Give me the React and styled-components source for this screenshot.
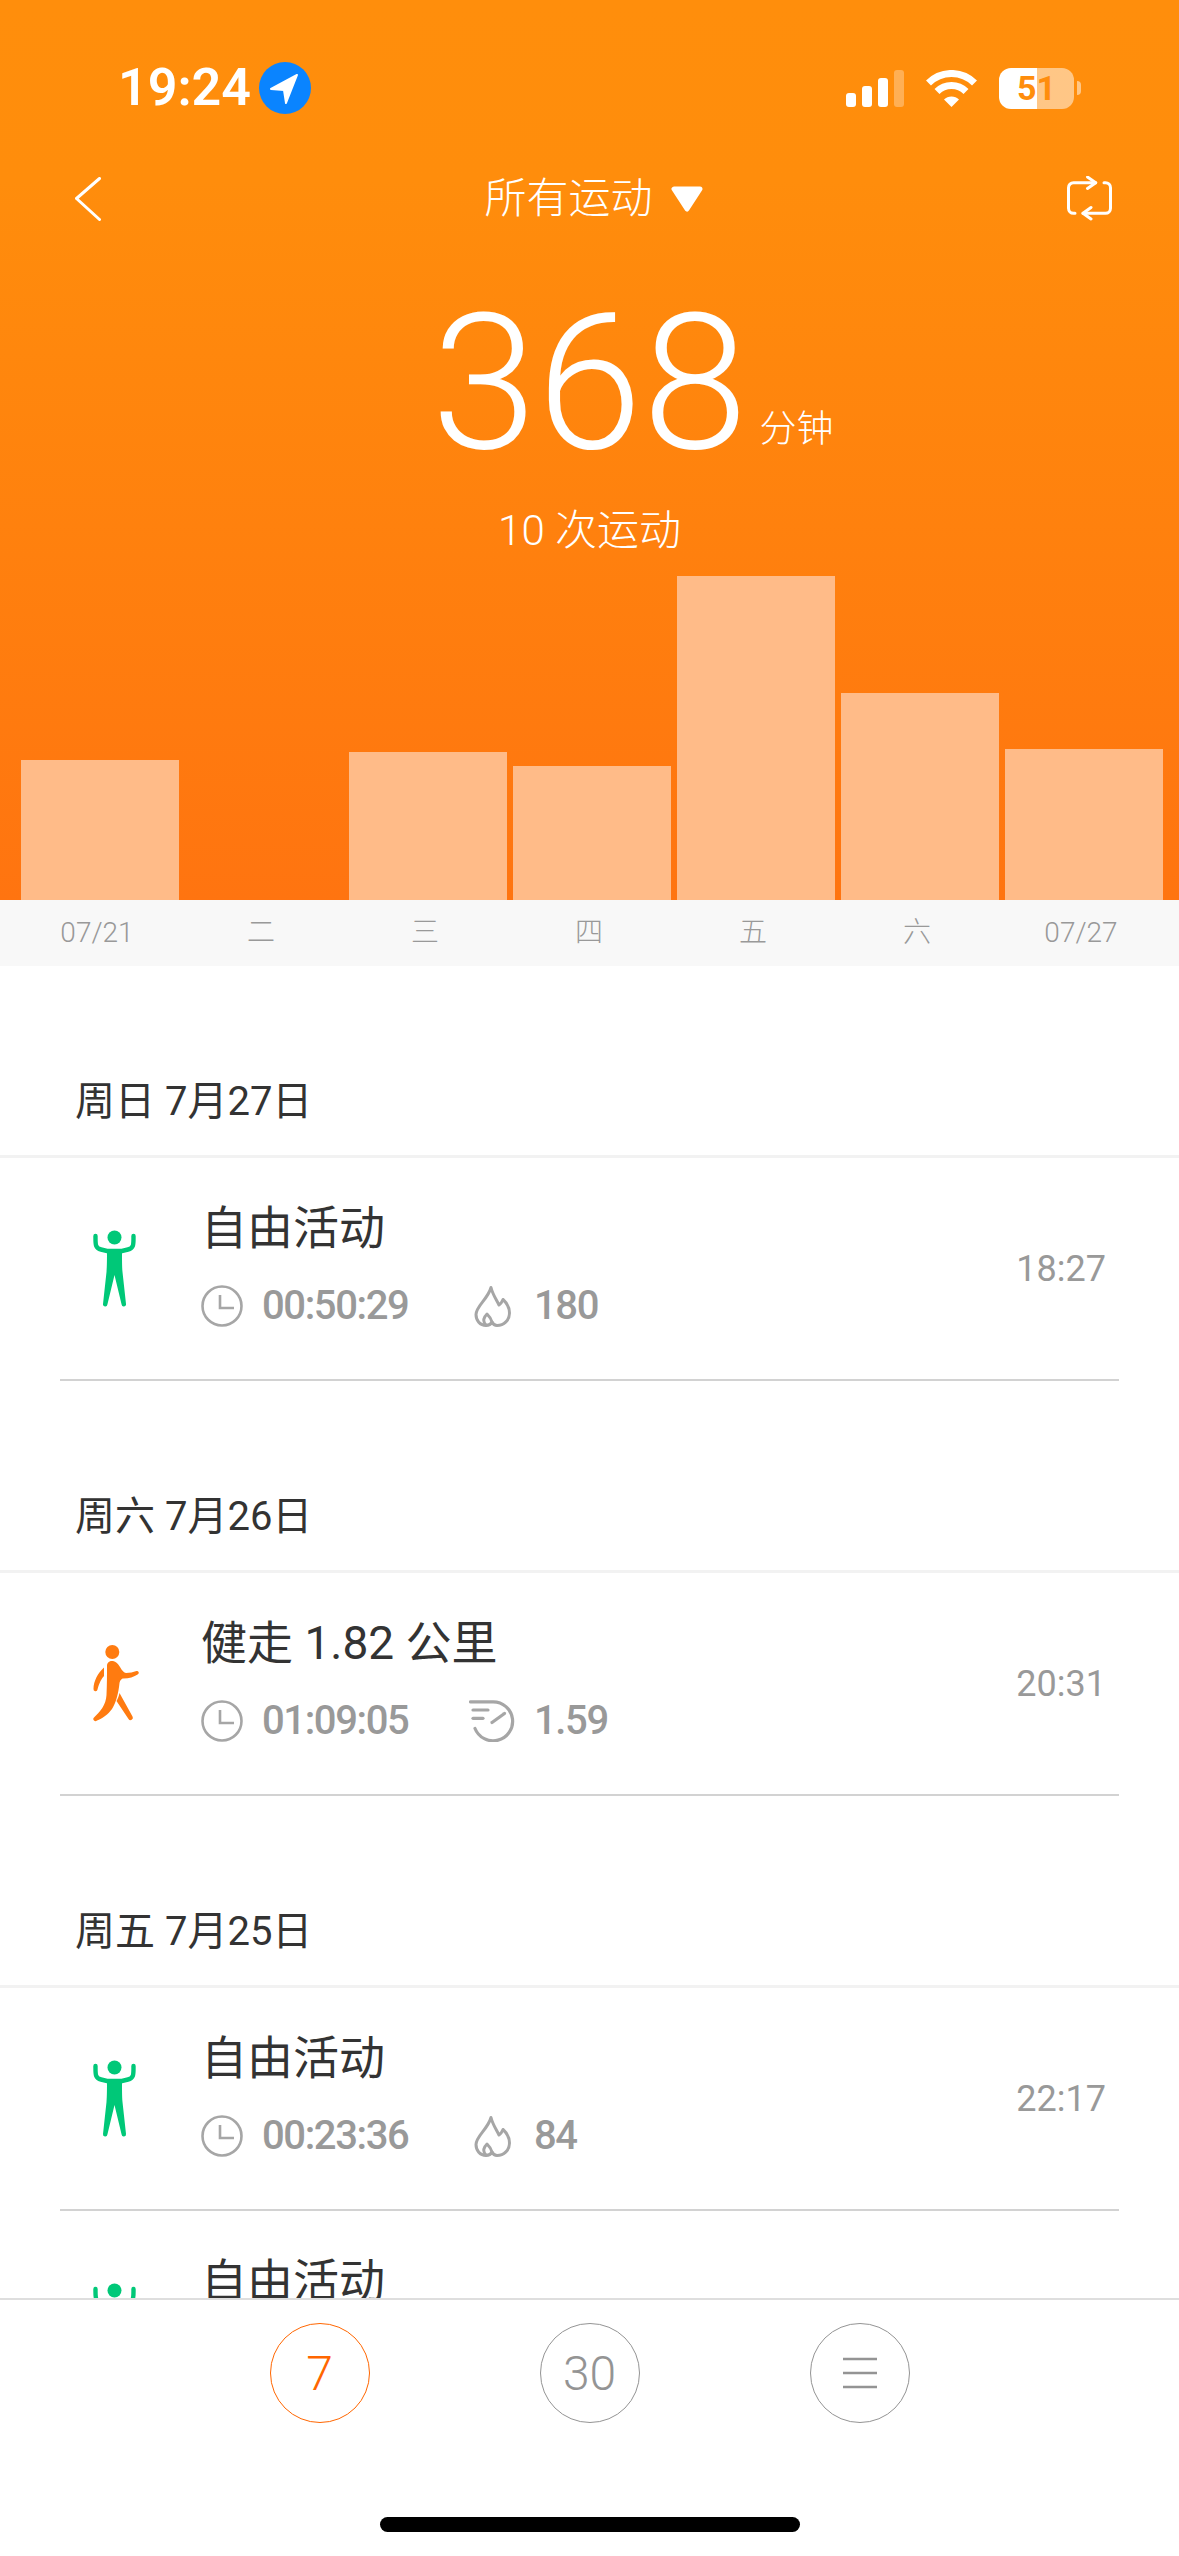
import React from "react"
import styled, { createGlobalStyle } from "styled-components"

const GlobalStyle = createGlobalStyle`
html, body {
    margin: 0;
    padding: 0;
    background: #fff;
}
body {
    font-family: Roboto, "Noto Sans CJK SC", sans-serif;
    color: #333;
}
`

const Page = styled.div`
width: 1179px;
height: 2556px;
display: flex;
flex-direction: column;
overflow: hidden;
background: #fff;
`

const Header = styled.header`
height: 900px;
flex: none;
display: flex;
flex-direction: column;
background: linear-gradient(180deg, #ff8e0c 0%, #ff8d0c 20%, #ff7410 100%);
color: #fff;
`

const StatusBar = styled.div`
height: 176px;
display: flex;
align-items: center;
justify-content: space-between;
padding: 0 98px 0 118px;
box-sizing: border-box;
`

const StatusGroup = styled.div`
display: flex;
align-items: center;
gap: ${props => props.gap}px;
`

const Clock = styled.span`
font-size: 52px;
font-weight: 600;
line-height: 52px;
`

const Signal = styled.div`
display: flex;
align-items: flex-end;
gap: 6px;
height: 37px;
`

const SignalBar = styled.div`
width: 10px;
height: ${props => props.h}px;
border-radius: 3px;
background: #fff;
opacity: ${props => props.off ? 0.3 : 1};
`

const Battery = styled.div`
display: flex;
align-items: center;
gap: 3px;
`

const BatteryBody = styled.div`
width: 75px;
height: 41px;
border-radius: 12px;
background: linear-gradient(90deg, #fff 0 51%, rgba(255, 255, 255, .5) 51% 100%);
color: #ff8d0c;
font-size: 34px;
font-weight: 700;
line-height: 41px;
text-align: center;
`

const BatteryTip = styled.div`
width: 4px;
height: 14px;
border-radius: 0 4px 4px 0;
background: rgba(255, 255, 255, .5);
`

const NavBar = styled.div`
display: grid;
grid-template-columns: 1fr auto 1fr;
align-items: center;
height: 44px;
padding: 0 67px 0 75px;
`

const NavTitle = styled.div`
display: flex;
align-items: center;
gap: 18px;
font-size: 42px;
font-weight: 300;
line-height: 44px;
`

const NavEnd = styled.div`
display: flex;
justify-content: flex-end;
`

const Hero = styled.div`
display: grid;
grid-template-columns: 1fr auto 1fr;
margin-top: 70px;
`

const TotalValue = styled.div`
font-size: 190px;
font-weight: 300;
line-height: 186px;
`

const TotalUnit = styled.div`
align-self: end;
margin: 0 0 26px 12px;
font-size: 37px;
font-weight: 300;
line-height: 40px;
`

const SessionCount = styled.div`
margin-top: 30px;
font-size: 42px;
font-weight: 300;
line-height: 50px;
text-align: center;
`

const Chart = styled.div`
margin-top: auto;
display: flex;
align-items: flex-end;
gap: 6px;
padding-left: 21px;
`

const ChartBar = styled.div`
width: 158px;
height: ${props => props.h}px;
background: #ffbb88;
`

const AxisStrip = styled.div`
height: 66px;
flex: none;
display: flex;
padding-left: 15px;
background: #f8f8f8;
`

const AxisLabel = styled.div`
width: 164px;
font-size: 28px;
font-weight: 300;
line-height: 66px;
color: #999;
text-align: center;
`

const List = styled.main`
flex: 1;
min-height: 0;
overflow: hidden;
`

const DateHeading = styled.div`
height: 189px;
box-sizing: border-box;
display: flex;
align-items: flex-end;
padding: 0 0 33px 75px;
border-bottom: 3px solid #f2f2f2;
height: 192px;
font-size: 40px;
font-weight: 400;
line-height: 40px;
color: #333;
`

const Row = styled.div`
height: 221px;
display: flex;
align-items: center;
padding: 0 73px 0 93px;
box-sizing: border-box;
`

const Figure = styled.div`
width: 108px;
flex: none;
display: flex;
`

const Info = styled.div`
display: flex;
flex-direction: column;
gap: 29px;
padding-bottom: 10px;
`

const Title = styled.div`
font-size: 46px;
font-weight: 400;
line-height: 56px;
color: #333;
`

const Metrics = styled.div`
display: flex;
height: 42px;
`

const Metric = styled.div`
display: flex;
align-items: center;
gap: 19px;
width: ${props => props.wide ? "268px" : "auto"};
font-size: 40px;
font-weight: 500;
letter-spacing: -1.4px;
line-height: 42px;
color: #999;
`

const MetricIcon = styled.div`
width: ${props => props.w}px;
height: 42px;
display: flex;
justify-content: center;
`

const StartTime = styled.div`
margin-left: auto;
font-size: 36px;
font-weight: 400;
line-height: 40px;
color: #999;
`

const Separator = styled.div`
height: 2px;
margin: 0 60px;
background: #d2d2d2;
`

const TabBar = styled.footer`
height: 258px;
flex: none;
box-sizing: border-box;
display: flex;
flex-direction: column;
padding-top: 23px;
border-top: 2px solid #dedede;
background: #fff;
`

const Tabs = styled.div`
display: flex;
justify-content: center;
gap: 170px;
`

const TabButton = styled.div`
width: 100px;
height: 100px;
box-sizing: border-box;
display: flex;
align-items: center;
justify-content: center;
border-radius: 50%;
border: 1.5px solid ${props => props.active ? "#ff6600" : "#949494"};
color: ${props => props.active ? "#ff6600" : "#949494"};
font-size: 48px;
font-weight: 300;
`

const HomeIndicator = styled.div`
width: 420px;
height: 15px;
margin: auto auto 24px;
border-radius: 8px;
background: #000;
`

const LocationIcon = () => (
    <svg width="52" height="52" viewBox="0 0 52 52">
        <circle cx="26" cy="26" r="26" fill="#0a84ff" />
        <path d="M38 13 L12 27 L25 28 L27 41 Z" fill="#fff" stroke="#fff" strokeWidth="2" strokeLinejoin="round" />
    </svg>
)

const WifiIcon = () => (
    <svg width="51" height="37" viewBox="0 0 51 37" fill="none" stroke="#fff" strokeWidth="7">
        <path d="M2.5 13 A32.5 32.5 0 0 1 48.5 13" />
        <path d="M11 21.5 A20.5 20.5 0 0 1 40 21.5" />
        <path d="M25.5 37 L18 29.5 A10.6 10.6 0 0 1 33 29.5 Z" fill="#fff" stroke="none" />
    </svg>
)

const BackIcon = () => (
    <svg width="26" height="44" viewBox="0 0 26 44" fill="none" stroke="#fff" strokeWidth="3" strokeLinecap="round" strokeLinejoin="round">
        <path d="M24.5 1.5 L1.5 21.5 L24.5 42.5" />
    </svg>
)

const Caret = () => (
    <svg width="32" height="26" viewBox="0 0 32 26">
        <path d="M3 3 H29 L16 23 Z" fill="#fff" stroke="#fff" strokeWidth="5" strokeLinejoin="round" />
    </svg>
)

const RepeatIcon = () => (
    <svg width="45" height="45" viewBox="0 0 45 45" fill="none" stroke="#fff" strokeWidth="3" strokeLinecap="round" strokeLinejoin="round">
        <path d="M28.7 6.7 H6.5 a5 5 0 0 0 -5 5 V32.3 a5 5 0 0 0 5 5 H8" />
        <path d="M20.5 1 L28.7 6.7 L20.5 12.5" />
        <path d="M16 37.3 H38.5 a5 5 0 0 0 5 -5 V11.7 a5 5 0 0 0 -5 -5 H37" />
        <path d="M24 31.5 L16 37.3 L24 43" />
    </svg>
)

const FreeActivityIcon = () => (
    <svg width="43" height="78" viewBox="0 0 43 78" fill="#00c878">
        <circle cx="21.5" cy="7.5" r="7" />
        <path d="M2.5 6 C2.5 14 2 18 8 19.5 L14 21 H29 L35 19.5 C41 18 40.5 14 40.5 6" fill="none" stroke="#00c878" strokeWidth="4.4" strokeLinecap="round" />
        <path d="M14 20 H29 C29 30 29 36 29.5 42 L33 74 a2.2 2.2 0 0 1 -4.4 .6 L21.5 45 L14.4 74.6 a2.2 2.2 0 0 1 -4.4 -.6 L13.5 42 C14 36 14 30 14 20 Z" />
    </svg>
)

const WalkIcon = () => (
    <svg width="46" height="78" viewBox="0 0 46 78" fill="#ff7b10">
        <circle cx="19.3" cy="7" r="7" />
        <path d="M11 22.5 C5 28 .5 36 .5 44 a2 2 0 0 0 4 .5 C6 38 9 33 11 31 Z" />
        <path d="M14 21 C14 17 17 15.5 20 16 C23 16.5 25 19 27 22 C29 25.5 31 28 33 28 C37 28 40 27 43.5 26 a1.8 1.8 0 0 1 1.5 3.2 C41 32 36 33.5 30.5 33.5 C28 33.5 27 36 26.5 38 C25.5 48 23 58 19 64 C15.5 69 9 74 4 75.5 a2 2 0 0 1 -3 -3 C7 67 13 60 13.5 50 C14 40 14 30 14 21 Z" />
        <path d="M26.5 48 L39.5 71.5 a2.3 2.3 0 0 1 -4 2.5 L23.5 56 C25 53 26 51 26.5 48 Z" />
    </svg>
)

const DurationIcon = () => (
    <svg width="42" height="42" viewBox="0 0 42 42" fill="none" stroke="#a6a6a6" strokeWidth="2.6">
        <circle cx="21" cy="21" r="19.5" />
        <path d="M19 10 V23 H33" />
    </svg>
)

const FlameIcon = () => (
    <svg width="37" height="42" viewBox="0 0 37 42" fill="none" stroke="#a6a6a6" strokeWidth="3" strokeLinejoin="round" strokeLinecap="round">
        <path d="M17 2.5 C18.5 9 22 14 25 20 C26.5 19 28 17 29 14.5 C33 18 35.5 23 35.5 28 C35.5 35 30 40.5 23 40.5 C20.5 40.5 19 39 18 37 C17 39 14.5 40.5 12 40.5 C6 40.5 2 35.5 2 29.5 C2 21 14 14 17 2.5 Z" />
        <path d="M12 40 C8 36 10 32 13 29 C15 31 17 33 18 37" />
    </svg>
)

const PaceIcon = () => (
    <svg width="46" height="42" viewBox="0 0 46 42" fill="none" stroke="#a6a6a6" strokeWidth="3.2" strokeLinecap="round">
        <path d="M1.5 1.8 H24 A19.5 19.5 0 1 1 6 28.5" />
        <path d="M4 10 H19" />
        <path d="M4 18.3 H14" />
        <path d="M23 22.5 L35.5 13.5" />
    </svg>
)

const MenuIcon = () => (
    <svg width="34" height="32" viewBox="0 0 34 32" stroke="#949494" strokeWidth="2.6">
        <path d="M0 2 H34 M0 16 H34 M0 30 H34" />
    </svg>
)

const chartHeights = [140, 0, 148, 134, 324, 207, 151]
const axisLabels = ["07/21", "二", "三", "四", "五", "六", "07/27"]

const sessions = [
    { date: "周日 7月27日", title: "自由活动", kind: "free", duration: "00:50:29", value: "180", time: "18:27" },
    { date: "周六 7月26日", title: "健走 1.82 公里", kind: "walk", duration: "01:09:05", value: "1.59", time: "20:31" },
    { date: "周五 7月25日", title: "自由活动", kind: "free", duration: "00:23:36", value: "84", time: "22:17" },
    { title: "自由活动", kind: "free", duration: "00:31:12", value: "96", time: "19:05" },
]

function SessionRow({ session }) {
    const isWalk = session.kind === "walk"
    return <Row>
        <Figure>{isWalk ? <WalkIcon /> : <FreeActivityIcon />}</Figure>
        <Info>
            <Title>{session.title}</Title>
            <Metrics>
                <Metric wide>
                    <MetricIcon w={42}><DurationIcon /></MetricIcon>
                    {session.duration}
                </Metric>
                <Metric>
                    <MetricIcon w={46}>{isWalk ? <PaceIcon /> : <FlameIcon />}</MetricIcon>
                    {session.value}
                </Metric>
            </Metrics>
        </Info>
        <StartTime>{session.time}</StartTime>
    </Row>
}

export default function App() {
    return <Page>
        <GlobalStyle />
        <Header>
            <StatusBar>
                <StatusGroup gap={8}>
                    <Clock>19:24</Clock>
                    <LocationIcon />
                </StatusGroup>
                <StatusGroup gap={22}>
                    <Signal>
                        <SignalBar h={14} />
                        <SignalBar h={21} />
                        <SignalBar h={29} />
                        <SignalBar h={37} off />
                    </Signal>
                    <WifiIcon />
                    <Battery>
                        <BatteryBody>51</BatteryBody>
                        <BatteryTip />
                    </Battery>
                </StatusGroup>
            </StatusBar>
            <NavBar>
                <BackIcon />
                <NavTitle>所有运动<Caret /></NavTitle>
                <NavEnd><RepeatIcon /></NavEnd>
            </NavBar>
            <Hero>
                <span />
                <TotalValue>368</TotalValue>
                <TotalUnit>分钟</TotalUnit>
            </Hero>
            <SessionCount>10 次运动</SessionCount>
            <Chart>
                {chartHeights.map((h, i) => <ChartBar key={i} h={h} />)}
            </Chart>
        </Header>
        <AxisStrip>
            {axisLabels.map(label => <AxisLabel key={label}>{label}</AxisLabel>)}
        </AxisStrip>
        <List>
            {sessions.map(session => <React.Fragment key={session.time}>
                {session.date && <DateHeading>{session.date}</DateHeading>}
                <SessionRow session={session} />
                <Separator />
            </React.Fragment>)}
        </List>
        <TabBar>
            <Tabs>
                <TabButton active>7</TabButton>
                <TabButton>30</TabButton>
                <TabButton><MenuIcon /></TabButton>
            </Tabs>
            <HomeIndicator />
        </TabBar>
    </Page>
}
